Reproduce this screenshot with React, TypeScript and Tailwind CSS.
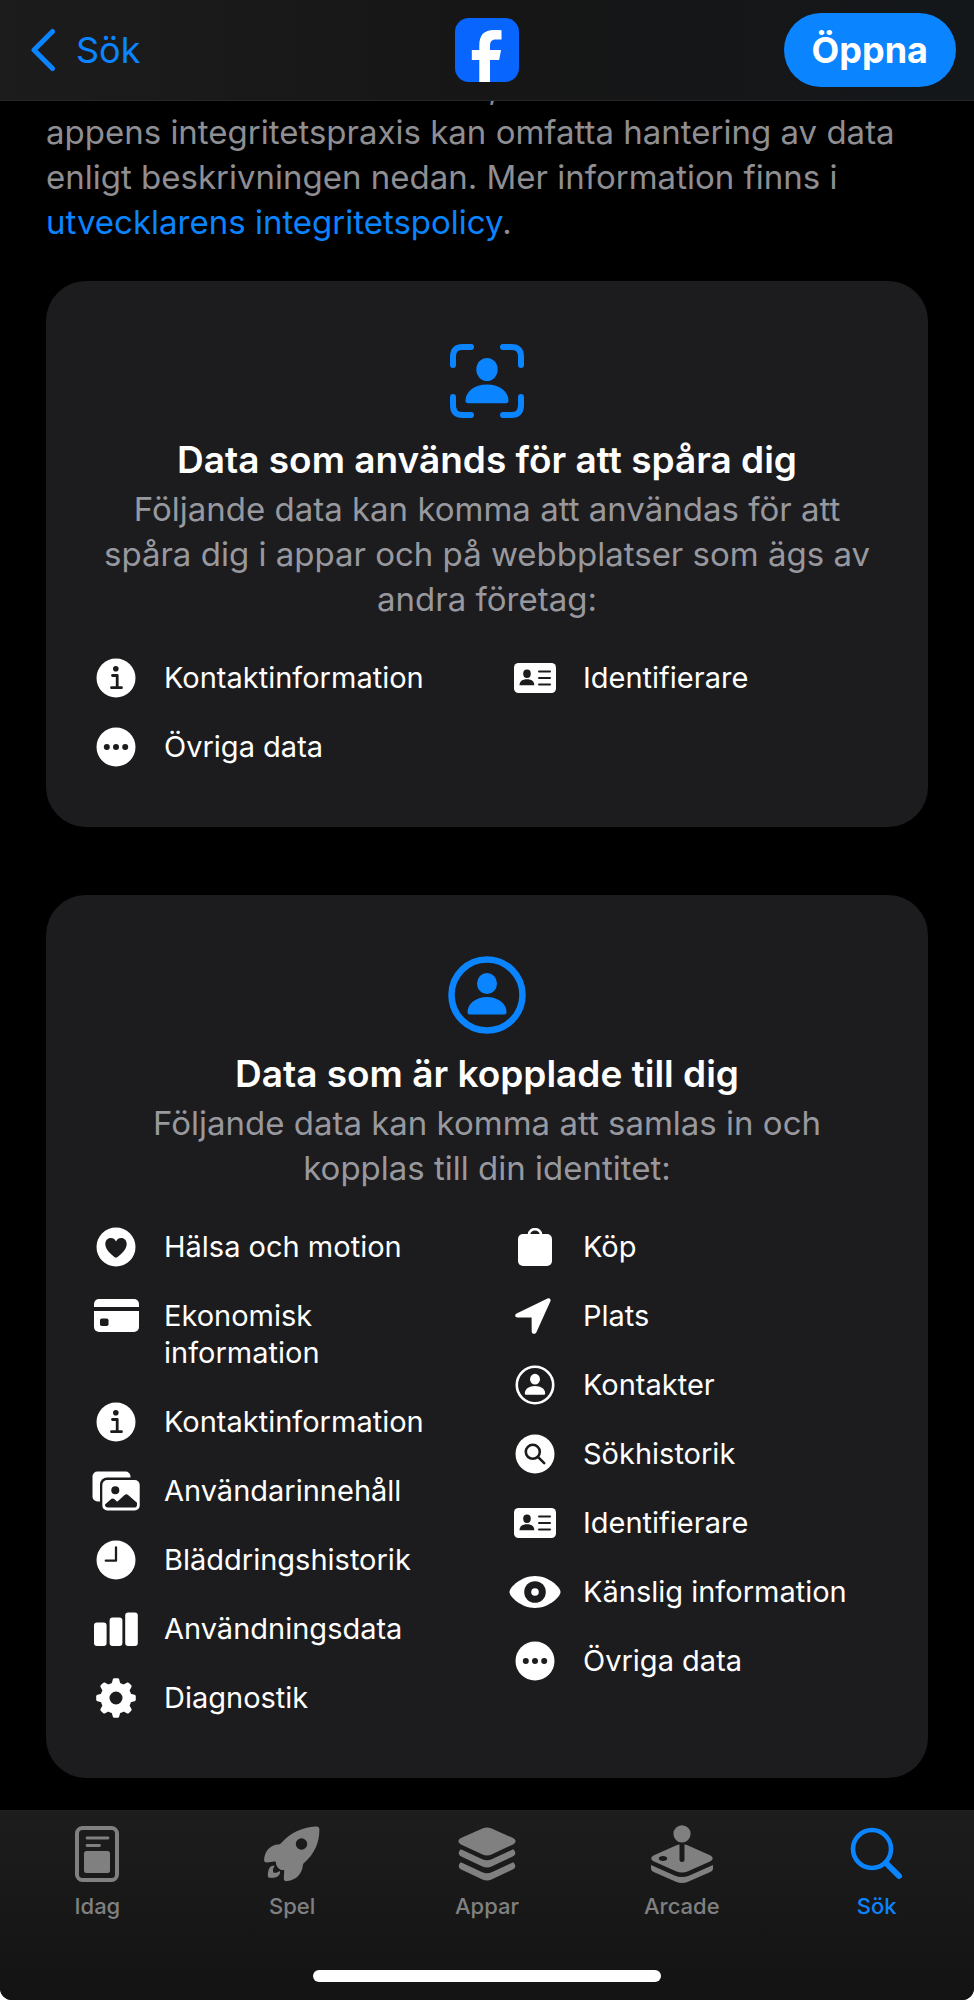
import type { ReactNode } from "react";

type Item = {
  icon: ReactNode;
  label: string;
};

type CardProps = {
  icon: ReactNode;
  title: string;
  text: string;
  left: Array<Item>;
  right: Array<Item>;
};

const INK = "#1c1c1e";

const Info = () => (
  <svg viewBox="0 0 40 40" className="size-10" fill={INK}>
    <circle cx="20" cy="20" r="19.5" fill="white" />
    <circle cx="19.8" cy="10.8" r="2.8" />
    <path d="M16.5 17.5h4.7v12M15.5 29.7h10" fill="none" stroke={INK} strokeWidth="2.8" strokeLinecap="round" strokeLinejoin="round" />
  </svg>
);

const Dots = () => (
  <svg viewBox="0 0 40 40" className="size-10" fill={INK}>
    <circle cx="20" cy="20" r="19.5" fill="white" />
    <circle cx="10.8" cy="20" r="3" />
    <circle cx="20" cy="20" r="3" />
    <circle cx="29.2" cy="20" r="3" />
  </svg>
);

const IdCard = () => (
  <svg viewBox="0 0 42 30" className="w-[42px]" fill={INK}>
    <rect width="42" height="30" rx="4.5" fill="white" />
    <ellipse cx="13" cy="10.8" rx="3.8" ry="4.2" />
    <path d="M5.5 22.3c0-4 3-6 7.5-6s7.3 2 7.3 6z" />
    <path d="M25 8.5h11M25 15h11M25 21.5h11" stroke={INK} strokeWidth="2" strokeLinecap="round" />
  </svg>
);

const Heart = () => (
  <svg viewBox="0 0 40 40" className="size-10" fill={INK}>
    <circle cx="20" cy="20" r="19.5" fill="white" />
    <path d="M20 30.8c-.6 0-10.7-6.8-10.7-13.6 0-3.6 2.3-6.1 5.5-6.1 2.3 0 4.1 1.2 5.2 3.3 1.1-2.1 2.9-3.3 5.2-3.3 3.2 0 5.5 2.5 5.5 6.1 0 6.8-10.1 13.6-10.7 13.6z" />
  </svg>
);

const CreditCard = () => (
  <svg viewBox="0 0 45 33" className="w-[45px]" fill={INK}>
    <rect width="45" height="33" rx="5" fill="white" />
    <path d="M0 8h45v4H0z" />
    <rect x="6" y="19.5" width="8.5" height="7.5" rx="1.8" />
  </svg>
);

const Photos = () => (
  <svg viewBox="0 0 48 40" className="w-12">
    <rect x=".5" y=".5" width="38" height="30" rx="5" fill="white" />
    <rect x="8" y="6.5" width="44" height="38" rx="7" fill={INK} />
    <rect x="10.3" y="9" width="37.4" height="30.5" rx="5" fill="white" />
    <circle cx="23.3" cy="19.3" r="4" fill={INK} />
    <path d="M13 33.6l6.2-5.5c1-.9 2-.9 3 0l3 2.7 7.1-6.5c1.4-1.3 2.7-1.3 4.1 0L45 31.8v1.6c0 2.2-1 3.2-3.2 3.2H16c-2 0-3-.8-3-3z" fill={INK} />
  </svg>
);

const Clock = () => (
  <svg viewBox="0 0 40 40" className="size-10">
    <circle cx="20" cy="20" r="19.5" fill="white" />
    <path d="M20 7.5v13.2H9.8" fill="none" stroke={INK} strokeWidth="2.3" strokeLinecap="round" strokeLinejoin="round" />
  </svg>
);

const Bars = () => (
  <svg viewBox="0 0 44 34" className="w-11" fill="white">
    <rect x="0" y="10.5" width="12.6" height="23.5" rx="3" />
    <rect x="15.6" y="5.5" width="12.8" height="28.5" rx="3" />
    <rect x="31.2" y=".5" width="12.6" height="33.5" rx="3" />
  </svg>
);

const Gear = () => (
  <svg viewBox="0 0 40 40" className="size-10" fill="white">
    <circle cx="20" cy="20" r="11" fill="none" stroke="white" strokeWidth="9" />
    {[0, 45, 90, 135, 180, 225, 270, 315].map((deg) => (
      <path key={deg} d="M15.4 6.5l1.4-5c.3-.9.8-1.3 1.7-1.3h3c.9 0 1.4.4 1.7 1.3l1.4 5z" transform={`rotate(${deg} 20 20)`} />
    ))}
  </svg>
);

const Bag = () => (
  <svg viewBox="0 0 34 38" className="w-[34px]">
    <path d="M11 8V6.5a6 5.3 0 0 1 12 0V8" fill="none" stroke="white" strokeWidth="2.6" />
    <rect y="6" width="34" height="32" rx="5" fill="white" />
  </svg>
);

const Arrow = () => (
  <svg viewBox="0 0 36 36" className="mr-1 size-9" fill="white">
    <path d="M1.6 15.5L32.5.4c2-.9 3.8.7 2.9 2.9L21.4 34.2c-1.2 2.5-4.7 2-4.7-.8l-.1-13.8-13.9-.1c-2.8 0-3.4-2.9-1.1-4z" />
  </svg>
);

const PersonCircle = () => (
  <svg viewBox="0 0 40 40" className="size-10" fill="white">
    <circle cx="20" cy="20" r="18.2" fill="none" stroke="white" strokeWidth="2.6" />
    <ellipse cx="20" cy="14.2" rx="5" ry="5.4" />
    <path d="M9.8 28.5c0-4.6 4.3-7.5 10.2-7.5s10.2 2.9 10.2 7.5c0 .8-.4 1.2-1.2 1.2H11c-.8 0-1.2-.4-1.2-1.2z" />
  </svg>
);

const SearchCircle = () => (
  <svg viewBox="0 0 40 40" className="size-10">
    <circle cx="20" cy="20" r="19.5" fill="white" />
    <g fill="none" stroke={INK} strokeWidth="2.6" strokeLinecap="round">
      <circle cx="17.8" cy="17.8" r="7" />
      <path d="M23.2 23.2l6 6" />
    </g>
  </svg>
);

const Eye = () => (
  <svg viewBox="0 0 52 34" className="w-[52px]">
    <path d="M26 1C40 1 51.500 12.500 51.500 17S40 33 26 33 .5 21.500.5 17 12 1 26 1z" fill="white" />
    <circle cx="26" cy="17" r="10.8" fill={INK} />
    <circle cx="26" cy="17" r="3.8" fill="white" />
  </svg>
);

const TrackingIcon = () => (
  <svg viewBox="0 0 74 74" className="size-[74px]" fill="#0a84ff">
    <path
      d="M3 21v-8C3 6 6 3 13 3h8M53 3h8c7 0 10 3 10 10v8M71 53v8c0 7-3 10-10 10h-8M21 71h-8C6 71 3 68 3 61v-8"
      fill="none"
      stroke="#0a84ff"
      strokeWidth="6"
      strokeLinecap="round"
    />
    <ellipse cx="37" cy="25.5" rx="10.7" ry="11.5" />
    <path d="M15.5 56.5C15.5 48 24 40.5 37 40.5S58.5 48 58.5 56.5c0 2-.7 2.7-2.7 2.7H18.2c-2 0-2.7-.7-2.7-2.7z" />
  </svg>
);

const LinkedIcon = () => (
  <svg viewBox="0 0 78 78" className="size-[78px]" fill="#0a84ff">
    <circle cx="39" cy="39" r="35.5" fill="none" stroke="#0a84ff" strokeWidth="6.5" />
    <ellipse cx="39" cy="27.5" rx="10" ry="10.6" />
    <path d="M19.5 56C19.5 48 27.5 41 39 41s19.5 7 19.5 15c0 1.800-.7 2.500-2.500 2.500H22c-1.800 0-2.500-.7-2.500-2.500z" />
  </svg>
);

const Today = () => (
  <svg viewBox="0 0 44 56" className="h-14" fill="currentColor">
    <rect x="2" y="2" width="40" height="52" rx="5.5" fill="none" stroke="currentColor" strokeWidth="4" />
    <path d="M12 12h21M12 19.5h12.5" stroke="currentColor" strokeWidth="2.8" strokeLinecap="round" />
    <rect x="9" y="25" width="26" height="22" rx="2.5" />
  </svg>
);

const Rocket = () => (
  <svg viewBox="0 0 56 56" className="size-14" fill="currentColor">
    <path
      fillRule="evenodd"
      d="M51.5.5c2.6-.3 3.8.6 3.9 3.1.1 13-5 24.5-15.1 33.2-.9.8-1.4 1.5-1.5 2.7-.7 8.5-6.4 14.4-15.6 15.6-2.4.3-3.5-.7-3.4-2.8l.4-6.8c.1-1.1-.3-1.5-1.2-1.4-3.3.2-7.3-3.7-7.1-7.3 0-1-.5-1.3-1.5-1.2l-7.3.8C1 36.6 0 35.700.1 33.800.5 26 5.300 19.400 13.500 18.500c1.500-.1 2.700-.2 3.700-1.500C26.300 6.800 38 1.300 51.500.5zM37.500 12.300a5.700 5.700 0 1 0 0 11.400 5.700 5.700 0 0 0 0-11.400z"
    />
    <path d="M8.5 39.8c.8-.2 1.6-.1 2.200.3-1.700 1.700-2.300 4.500-1.300 6.300 1.500 1 4.300.3 6.200-1.300.6.600.6 1.400.3 2.300-1.200 3.400-4.600 4.600-10.300 4.400-1.200 0-1.700-.5-1.700-1.700-.1-5.400 1.100-9.100 4.600-10.300z" />
  </svg>
);

const Stack = () => (
  <svg viewBox="0 0 58 56" className="h-14" fill="currentColor">
    <path d="M25 2.300c2.800-1.100 5.200-1.100 8 0l21.500 9.500c4 1.800 4 5 0 6.900L33.500 28.500c-3 1.300-6 1.300-9 0L3.500 18.700c-4-1.900-4-5.100 0-6.900z" />
    <path d="M2.800 23.200L23.800 33c3.600 1.600 6.800 1.600 10.400 0l21-9.800c3.300 3 2.500 6-1 7.600L33.500 40.500c-3 1.300-6 1.300-9 0L3.800 30.800c-3.500-1.600-4.300-4.600-1-7.600z" />
    <path d="M2.800 36.200L23.800 46c3.600 1.600 6.800 1.600 10.400 0l21-9.800c3.300 3 2.500 6-1 7.600L33.500 53.500c-3 1.300-6 1.300-9 0L3.800 43.800c-3.500-1.600-4.300-4.600-1-7.600z" />
  </svg>
);

const Joystick = () => (
  <svg viewBox="0 0 64 58" className="h-[58px]" fill="currentColor">
    <circle cx="32" cy="8.8" r="8.6" />
    <path
      fillRule="evenodd"
      d="M29.5 19.5v15a2.5 2.5 0 0 0 5 0v-15c1 .1 2 .4 3 .8L60 30.2c3.6 1.7 3.6 4.5 0 6.2L38 46.3c-4 1.7-8 1.7-12 0L4 36.4c-3.6-1.7-3.6-4.5 0-6.2l22.500-9.900c1-.4 2-.7 3-.8zM13 31c-2.400 0-4.300 1.100-4.300 2.500S10.600 36 13 36s4.300-1.100 4.300-2.500S15.400 31 13 31z"
    />
    <path d="M1 40l23.500 10.400c5 2.100 10 2.100 15 0L63 40v3.200c0 1.800-1 3-2.700 3.800L38 56.800c-4 1.600-8 1.600-12 0L3.700 47C2 46.200 1 45 1 43.200z" />
  </svg>
);

const Search = () => (
  <svg viewBox="0 0 54 54" className="size-[54px]" fill="none" stroke="currentColor" strokeLinecap="round">
    <circle cx="22" cy="22" r="19" strokeWidth="4.6" />
    <path d="M36 36l13 13" strokeWidth="6" />
  </svg>
);

const trackingLeft: Array<Item> = [
  { icon: <Info />, label: "Kontaktinformation" },
  { icon: <Dots />, label: "Övriga data" },
];

const trackingRight: Array<Item> = [{ icon: <IdCard />, label: "Identifierare" }];

const linkedLeft: Array<Item> = [
  { icon: <Heart />, label: "Hälsa och motion" },
  { icon: <CreditCard />, label: "Ekonomisk information" },
  { icon: <Info />, label: "Kontaktinformation" },
  { icon: <Photos />, label: "Användarinnehåll" },
  { icon: <Clock />, label: "Bläddringshistorik" },
  { icon: <Bars />, label: "Användningsdata" },
  { icon: <Gear />, label: "Diagnostik" },
];

const linkedRight: Array<Item> = [
  { icon: <Bag />, label: "Köp" },
  { icon: <Arrow />, label: "Plats" },
  { icon: <PersonCircle />, label: "Kontakter" },
  { icon: <SearchCircle />, label: "Sökhistorik" },
  { icon: <IdCard />, label: "Identifierare" },
  { icon: <Eye />, label: "Känslig information" },
  { icon: <Dots />, label: "Övriga data" },
];

const tabs = [
  { icon: <Today />, label: "Idag", active: false },
  { icon: <Rocket />, label: "Spel", active: false },
  { icon: <Stack />, label: "Appar", active: false },
  { icon: <Joystick />, label: "Arcade", active: false },
  { icon: <Search />, label: "Sök", active: true },
];

const ItemList = ({ items }: { items: Array<Item> }) => (
  <ul className="flex flex-col gap-8">
    {items.map((item) => (
      <li className="flex gap-5" key={item.label}>
        <span className="flex h-[37px] w-14 shrink-0 items-center justify-center">
          {item.icon}
        </span>
        <span className="text-[29px] leading-[37px]">{item.label}</span>
      </li>
    ))}
  </ul>
);

const Card = ({ icon, title, text, left, right }: CardProps) => (
  <section className="flex flex-col items-center rounded-[40px] bg-[#1c1c1e] px-[42px] pt-[60px] pb-[62px]">
    <div className="flex h-20 items-center">{icon}</div>
    <h2 className="mt-4 text-[37px] leading-[46px] font-semibold">{title}</h2>
    <p className="mt-1 px-2 text-center text-[33px] leading-[45px] text-[#98989f]">
      {text}
    </p>
    <div className="mt-[37px] grid w-full grid-cols-2 items-start gap-10">
      <ItemList items={left} />
      <ItemList items={right} />
    </div>
  </section>
);

const App = () => {
  return (
    <div className="bg-white">
      <div className="flex min-h-screen flex-col overflow-hidden rounded-b-xl bg-black font-[Inter,sans-serif] text-white">
        <header className="z-10 grid h-[101px] shrink-0 grid-cols-3 items-center border-b border-[#262626] bg-linear-to-r from-[#1c1c1c] via-[#161616] to-[#14171a] px-[18px]">
          <button className="flex items-center gap-5 justify-self-start pl-3 text-[36px] text-[#0a84ff]">
            <svg viewBox="0 0 26 44" className="h-11" fill="none" stroke="currentColor" strokeWidth="5" strokeLinecap="round" strokeLinejoin="round">
              <path d="M22.5 3.5L4 22l18.5 18.5" />
            </svg>
            Sök
          </button>
          <svg viewBox="0 0 64 64" className="size-16 justify-self-center">
            <rect width="64" height="64" rx="14" fill="#0866ff" />
            <path d="M24.300 64V42h-7.500V32h7.500v-4.500C24.300 17 29 12 39 12c3 0 5.500.1 7.500.3V21.500h-5c-4.600 0-6.500 1.900-6.500 6.300V32h11l-1.800 10H35v22z" fill="white" />
          </svg>
          <button className="h-[74px] justify-self-end rounded-full bg-[#0a84ff] px-7 text-[36px] font-bold">
            Öppna
          </button>
        </header>

        <main className="flex-1 px-[46px] pb-8">
          <p className="-mt-9 text-[33px] leading-[45px] text-[#8e8e93]">
            <span className="block pl-3 text-center">,</span>
            appens integritetspraxis kan omfatta hantering av data enligt
            beskrivningen nedan. Mer information finns i{" "}
            <a href="#" className="text-[#0a84ff]">
              utvecklarens integritetspolicy
            </a>
            .
          </p>
          <div className="mt-9 flex flex-col gap-[68px]">
            <Card
              icon={<TrackingIcon />}
              title="Data som används för att spåra dig"
              text="Följande data kan komma att användas för att spåra dig i appar och på webbplatser som ägs av andra företag:"
              left={trackingLeft}
              right={trackingRight}
            />
            <Card
              icon={<LinkedIcon />}
              title="Data som är kopplade till dig"
              text="Följande data kan komma att samlas in och kopplas till din identitet:"
              left={linkedLeft}
              right={linkedRight}
            />
          </div>
        </main>

        <footer className="flex h-[190px] shrink-0 flex-col border-t border-[#202020] bg-linear-to-b from-[#1d1d1e] to-[#131313]">
          <nav className="flex pt-[13px]">
            {tabs.map((tab) => (
              <a
                href="#"
                key={tab.label}
                className={`flex flex-1 flex-col items-center gap-2 text-[22px] leading-7 font-medium ${
                  tab.active ? "text-[#0a84ff]" : "text-[#808080]"
                }`}
              >
                <span className="flex h-[60px] items-center">{tab.icon}</span>
                {tab.label}
              </a>
            ))}
          </nav>
          <div className="mx-auto mt-auto mb-[18px] h-3 w-[348px] rounded-full bg-white" />
        </footer>
      </div>
    </div>
  );
};

export default App;
